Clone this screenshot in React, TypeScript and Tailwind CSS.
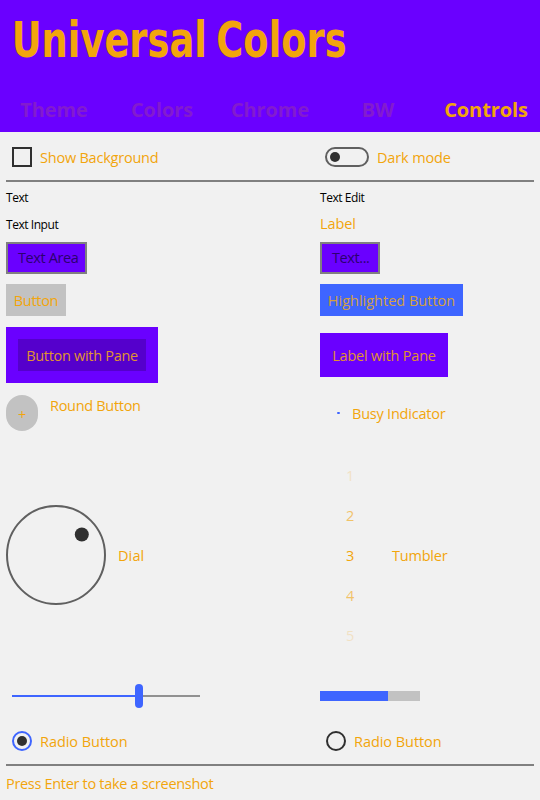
import type { ReactNode } from "react";

const GOLD = "text-[#f2a50c]";

function Row({ className, left, right }: { className: string; left: ReactNode; right: ReactNode }) {
  return (
    <div className={`grid grid-cols-[314px_1fr] items-center ${className}`}>
      <div className="flex items-center">{left}</div>
      <div className="flex items-center">{right}</div>
    </div>
  );
}

function Tabs() {
  const off = "text-[#821bcf]";
  return (
    <nav className="mt-[24px] grid h-[44px] grid-cols-5 text-center text-[20px] leading-[44px] font-bold tracking-[-0.1px]">
      <span className={off}>Theme</span>
      <span className={off}>Colors</span>
      <span className={off}>Chrome</span>
      <span className={off}>BW</span>
      <span className={GOLD}>Controls</span>
    </nav>
  );
}

function Tumbler() {
  return (
    <div className="flex w-[60px] flex-col pt-[2px] text-center leading-[40px]">
      <span className="opacity-20">1</span>
      <span className="opacity-60">2</span>
      <span>3</span>
      <span className="opacity-60">4</span>
      <span className="opacity-20">5</span>
    </div>
  );
}

export default function App() {
  return (
    <div className={`h-[800px] w-[540px] overflow-hidden bg-[#f1f1f1] font-['Open_Sans','Noto_Sans',sans-serif] text-[14.5px] leading-[20px] tracking-[-0.3px] whitespace-nowrap ${GOLD}`}>
      <header className="h-[132px] bg-[#6a00ff]">
        <h1 className="h-[64px] w-[460px] origin-left scale-x-[0.835] pt-[9px] pl-[14px] font-['DejaVu_Sans_Condensed','DejaVu_Sans',sans-serif] text-[49px] leading-[64px] font-bold tracking-normal [word-spacing:-4px]">
          Universal Colors
        </h1>
        <Tabs />
      </header>

      <main className="px-[6px]">
        <Row
          className="h-[48px]"
          left={
            <>
              <span className="mt-[2px] ml-[6px] h-[20px] w-[20px] border-2 border-[#303030]" />
              <span className="mt-[4px] ml-[8px] tracking-[-0.22px]">Show Background</span>
            </>
          }
          right={
            <>
              <span className="mt-[2px] ml-[5px] flex h-[20px] w-[44px] items-center rounded-full border-2 border-[#606060] pl-[3px]">
                <span className="h-[10px] w-[10px] rounded-full bg-[#303030]" />
              </span>
              <span className="mt-[4px] ml-[8px] tracking-[-0.15px]">Dark mode</span>
            </>
          }
        />
        <hr className="h-[2px] border-0 bg-[#808080]" />

        <Row className="mt-[6px] h-[20px] text-[12px] tracking-[-0.45px] text-black" left="Text" right="Text Edit" />
        <Row
          className="mt-[6px] h-[20px]"
          left={<span className="text-[12px] tracking-[-0.45px] text-black">Text Input</span>}
          right={<span className="mb-[2px] tracking-[-0.1px]">Label</span>}
        />
        <Row
          className="mt-[8px] h-[32px]"
          left={<div className="h-[32px] w-[81px] border-2 border-[#808080] bg-[#6a00ff] pl-[10px] leading-[27px] tracking-[-0.4px] text-[#2c0070]">Text Area</div>}
          right={<div className="h-[32px] w-[60px] border-2 border-[#808080] bg-[#6a00ff] pl-[10px] leading-[27px] tracking-[-0.4px] text-[#2c0070]">Text...</div>}
        />
        <Row
          className="mt-[10px] h-[32px]"
          left={<button className="h-[32px] w-[60px] bg-[#c2c2c2] pt-[2px]">Button</button>}
          right={<button className="h-[32px] w-[143px] bg-[#3e65ff] pt-[2px] tracking-[0px] text-[#d4a040]">Highlighted Button</button>}
        />
        <Row
          className="mt-[11px] h-[56px]"
          left={
            <div className="h-[56px] w-[152px] bg-[#6a00ff] p-[12px] text-[#e09430]">
              <button className="h-[32px] w-[128px] bg-[#5500cc] pt-[2px]">Button with Pane</button>
            </div>
          }
          right={<div className="h-[44px] w-[128px] bg-[#6a00ff] pt-[1px] text-center leading-[44px] tracking-[-0.2px] text-[#e09430]">Label with Pane</div>}
        />
        <Row
          className="mt-[12px] h-[36px]"
          left={
            <>
              <button className="h-[36px] w-[32px] rounded-[16px] bg-[#c2c2c2] pt-[4px]">+</button>
              <span className="mb-[14px] ml-[12px]">Round Button</span>
            </>
          }
          right={
            <>
              <span className="ml-[17px] h-[2px] w-[3px] rounded-[1px] bg-[#3e65ff]" />
              <span className="ml-[12px] pt-[2px] tracking-[-0.22px]">Busy Indicator</span>
            </>
          }
        />
        <Row
          className="mt-[23px] h-[202px]"
          left={
            <>
              <svg width="100" height="100" viewBox="0 0 100 100">
                <circle cx="50" cy="50" r="49" fill="none" stroke="#606060" strokeWidth="2" />
                <circle cx="75.8" cy="29.5" r="7" fill="#303030" />
              </svg>
              <span className="ml-[12px] pt-[2px] tracking-[0.1px]">Dial</span>
            </>
          }
          right={
            <>
              <Tumbler />
              <span className="ml-[12px] pt-[2px] tracking-[-0.2px]">Tumbler</span>
            </>
          }
        />
        <Row
          className="mt-[24px] h-[32px]"
          left={
            <div className="ml-[6px] flex w-[188px] items-center">
              <span className="h-[2px] w-[123px] bg-[#3e65ff]" />
              <span className="h-[24px] w-[8px] rounded-[4px] bg-[#3e65ff]" />
              <span className="h-[2px] flex-1 bg-[#919191]" />
            </div>
          }
          right={
            <div className="h-[10px] w-[100px] bg-[#c2c2c2]">
              <div className="h-[10px] w-[68px] bg-[#3e65ff]" />
            </div>
          }
        />
        <Row
          className="mt-[13px] h-[32px]"
          left={
            <>
              <span className="ml-[6px] flex h-[20px] w-[20px] items-center justify-center rounded-full border-2 border-[#3e65ff]">
                <span className="h-[10px] w-[10px] rounded-full bg-[#303030]" />
              </span>
              <span className="ml-[8px] pt-[2px] tracking-[-0.05px]">Radio Button</span>
            </>
          }
          right={
            <>
              <span className="ml-[6px] h-[20px] w-[20px] rounded-full border-2 border-[#303030]" />
              <span className="ml-[8px] pt-[2px] tracking-[-0.05px]">Radio Button</span>
            </>
          }
        />
        <hr className="mt-[7px] h-[2px] border-0 bg-[#808080]" />
        <p className="mt-[8px] tracking-[-0.31px]">Press Enter to take a screenshot</p>
      </main>
    </div>
  );
}
